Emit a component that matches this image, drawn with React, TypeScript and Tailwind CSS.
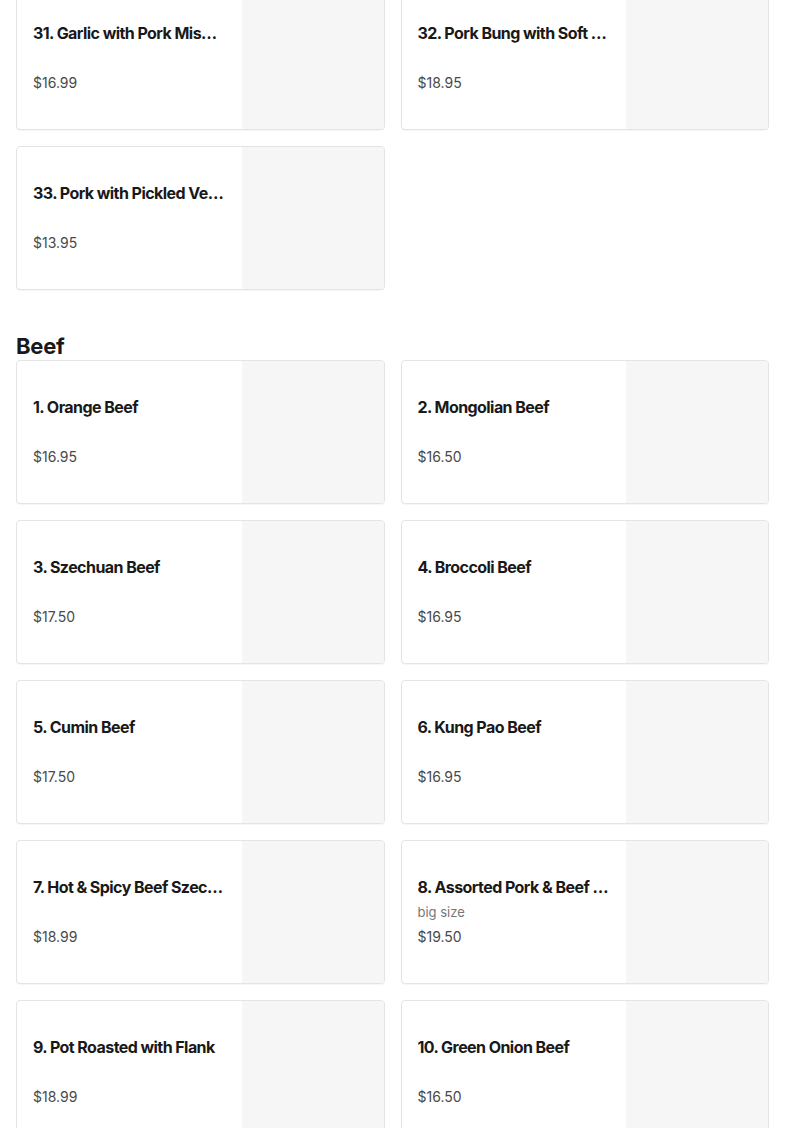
type Item = { name: string; price: string; note?: string };

const porkTail: Item[] = [
  { name: "31. Garlic with Pork Miscellaneous", price: "$16.99" },
  { name: "32. Pork Bung with Soft Tofu", price: "$18.95" },
  { name: "33. Pork with Pickled Vegetables", price: "$13.95" },
];

const beef: Item[] = [
  { name: "1. Orange Beef", price: "$16.95" },
  { name: "2. Mongolian Beef", price: "$16.50" },
  { name: "3. Szechuan Beef", price: "$17.50" },
  { name: "4. Broccoli Beef", price: "$16.95" },
  { name: "5. Cumin Beef", price: "$17.50" },
  { name: "6. Kung Pao Beef", price: "$16.95" },
  { name: "7. Hot & Spicy Beef Szechuan Style", price: "$18.99" },
  { name: "8. Assorted Pork & Beef Combo", price: "$19.50", note: "big size" },
  { name: "9. Pot Roasted with Flank", price: "$18.99" },
  { name: "10. Green Onion Beef", price: "$16.50" },
];

const MenuCard = ({ item }: { item: Item }) => (
  <div className="flex h-36 overflow-hidden rounded border border-[#e4e4e4] bg-white shadow-[0_1px_1px_rgba(0,0,0,0.04)]">
    <div className="flex min-w-0 flex-1 flex-col justify-center px-4">
      <p className="truncate text-base font-bold leading-6 tracking-[-0.035em] text-[#191919]">
        {item.name}
      </p>
      <p className="h-[26px] truncate text-[13px] leading-[26px] text-[#767676]">
        {item.note ?? ""}
      </p>
      <p className="text-sm leading-6 text-[#494949]">{item.price}</p>
    </div>
    <div className="w-[142px] shrink-0 bg-[#f6f6f6]" />
  </div>
);

const Grid = ({ items }: { items: Item[] }) => (
  <div className="grid grid-cols-2 gap-4">
    {items.map((item, i) => (
      <MenuCard item={item} key={i} />
    ))}
  </div>
);

export default function App() {
  return (
    <div
      className="h-[1128px] overflow-hidden bg-white px-4"
      style={{ fontFamily: "Inter, 'Liberation Sans', sans-serif" }}
    >
      <div className="-mt-[14px]">
        <Grid items={porkTail} />
      </div>
      <h2 className="mt-[42px] text-[22px] font-bold leading-7 tracking-[-0.01em] text-[#191919]">
        Beef
      </h2>
      <Grid items={beef} />
    </div>
  );
}
